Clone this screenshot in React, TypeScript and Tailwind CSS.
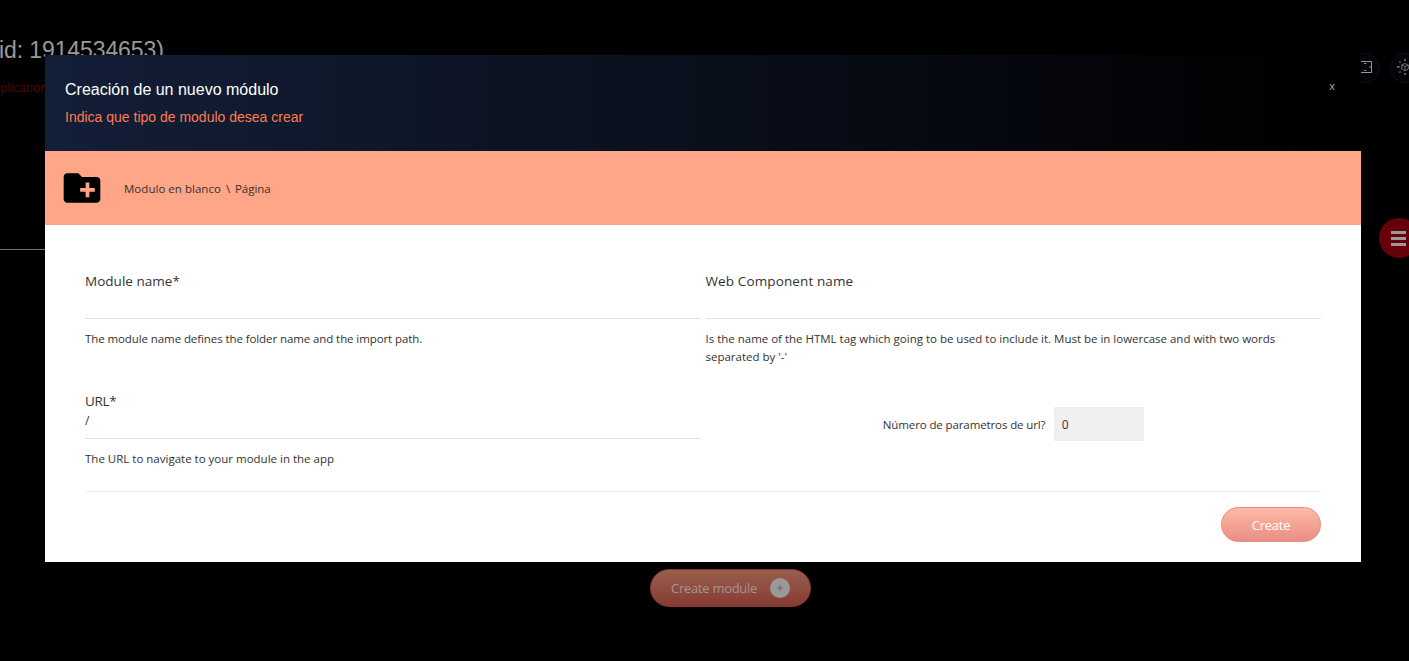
import React from "react";

function FolderPlus() {
  return (
    <svg className="block h-[44px] w-[44px]" viewBox="0 0 24 24" fill="#000">
      <path d="M20 6h-8l-2-2H4c-1.11 0-1.99.89-1.99 2L2 18c0 1.11.89 2 2 2h16c1.11 0 2-.89 2-2V8c0-1.11-.89-2-2-2zm-1 8h-3v3h-2v-3h-3v-2h3V9h2v3h3v2z" />
    </svg>
  );
}

function Backdrop() {
  return (
    <div className="flex h-full w-full flex-col">
      <div className="flex h-[249px] justify-between">
        <div className="flex flex-col pt-[36px]">
          <h1 className="-ml-px font-['Liberation_Sans',sans-serif] text-[23px] leading-[28px] tracking-[-0.1px] whitespace-nowrap text-[#999]">
            id: 1914534653)
          </h1>
          <p className="mt-[15px] text-[12px] leading-[18px] text-[#5c0006]">plication</p>
        </div>
        <div className="-mr-[11px] flex gap-[10px] pt-[53px]">
          <div className="flex h-[30px] w-[30px] items-center justify-center rounded-full border border-[#0c101b] bg-[#030408] pb-[2px]">
            <svg width="14" height="12" viewBox="0 0 14 12" fill="none" stroke="#999">
              <path d="M1 .5H13.500V11.500H1" />
              <path d="M6 2.500H8.500M6 9.500H8.500M11 6H13" strokeWidth=".9" />
            </svg>
          </div>
          <div className="flex h-[30px] w-[30px] items-center justify-center rounded-full border border-[#0c101b] bg-[#030408] pr-px pb-[2px]">
            <svg width="18" height="18" viewBox="0 0 18 18" fill="none" stroke="#858585">
              <path d="M9 5.500L12.300 7V11L9 12.800L5.700 11V7ZM5.700 7L9 8.500L12.300 7M9 8.500V12.800" strokeWidth=".8" />
              <path d="M9 1V3M9 15V17M1 9H3.500M14.500 9H17M3.500 3.500L4.500 4.500M14.500 3.500L13.500 4.500M3.500 14.500L4.500 13.500M14.500 14.500L13.500 13.500" strokeWidth="1.4" />
            </svg>
          </div>
        </div>
      </div>
      <div className="h-px w-[1300px] bg-[#737373]" />
      <div className="-mt-[32px] -mr-[10px] flex h-[40px] w-[40px] items-center self-end rounded-full bg-[#66000a] pl-[12px]">
        <svg width="15" height="15" viewBox="0 0 15 15" fill="#999">
          <path d="M0 0H15V3H0ZM0 6H15V9H0ZM0 12H15V15H0Z" />
        </svg>
      </div>
      <button className="mt-[311px] ml-[650px] flex h-[38px] w-[161px] items-center rounded-full border border-[#843831] bg-linear-to-b from-[#995f4e] to-[#853a32] pl-[20px] text-[#a39692]">
        <span className="w-[99px] pt-px text-left text-[13px] tracking-[-0.28px] whitespace-nowrap">Create module</span>
        <span className="flex h-[20px] w-[20px] items-center justify-center rounded-full bg-[#999]">
          <svg width="6" height="6" viewBox="0 0 6 6" stroke="#96564b">
            <path d="M0 3H6M3 0V6" />
          </svg>
        </span>
      </button>
    </div>
  );
}

interface FieldProps {
  label: string;
  value: string;
  hint: string;
  labelClass: string;
  hintClass: string;
}

function Field({ label, value, hint, labelClass, hintClass }: FieldProps) {
  return (
    <div className="flex-1">
      <div className={`text-[13.5px] leading-[20px] ${labelClass}`}>{label}</div>
      <div className="h-[28px] border-b border-[#e3e3da] pt-px text-[12px] leading-[18px]">{value}</div>
      <p className={`mt-[11px] text-[11.5px] leading-[18px] ${hintClass}`}>{hint}</p>
    </div>
  );
}

export default function App() {
  return (
    <div className="relative h-[661px] w-full overflow-hidden bg-black font-['Open_Sans','Noto_Sans',sans-serif] text-[#333]">
      <Backdrop />
      <section className="absolute top-[55px] left-[45px] flex h-[507px] w-[1316px] flex-col bg-white">
        <header className="flex h-[96px] justify-between bg-[linear-gradient(90deg,#131f38_0%,#000_97%)] px-[20px] font-['Liberation_Sans',sans-serif]">
          <div>
            <h2 className="mt-[25px] text-[16px] leading-[20px] text-white">Creación de un nuevo módulo</h2>
            <p className="mt-[8px] text-[14px] leading-[18px] text-[#ff7a50]">Indica que tipo de modulo desea crear</p>
          </div>
          <button className="mt-[22px] mr-[6px] h-[18px] font-['Open_Sans'] text-[11px] leading-[18px] text-[#aaa]">x</button>
        </header>
        <div className="flex h-[74px] items-center bg-[#ffa588] pl-[15px]">
          <FolderPlus />
          <div className="ml-[20px] flex pt-[2px] text-[11.5px] leading-[18px] whitespace-nowrap">
            <span className="w-[102px] tracking-[0.03px]">Modulo en blanco</span>
            <span className="w-[9px]">\</span>
            <span className="tracking-[-0.05px]">Página</span>
          </div>
        </div>
        <div className="px-[40px] pt-[46px]">
          <div className="flex h-[120px] gap-[5px]">
            <Field
              label="Module name*"
              value=""
              hint="The module name defines the folder name and the import path."
              labelClass="tracking-[0.02px]"
              hintClass="tracking-[-0.09px]"
            />
            <Field
              label="Web Component name"
              value=""
              hint="Is the name of the HTML tag which going to be used to include it. Must be in lowercase and with two words separated by '-'"
              labelClass="tracking-[0.12px]"
              hintClass="tracking-[-0.01px]"
            />
          </div>
          <div className="flex h-[101px] gap-[5px] border-b border-[#eee]">
            <Field
              label="URL*"
              value="/"
              hint="The URL to navigate to your module in the app"
              labelClass="tracking-[-0.3px]"
              hintClass=""
            />
            <div className="flex flex-1 items-start justify-center pt-[16px]">
              <label className="w-[171px] pt-px text-[11.5px] leading-[34px] tracking-[-0.11px] whitespace-nowrap">Número de parametros de url?</label>
              <div className="h-[34px] w-[90px] bg-[#efefef] pt-px pl-[8px] text-[12px] leading-[34px]">0</div>
            </div>
          </div>
          <div className="flex justify-end pt-[15px]">
            <button className="h-[35px] w-[100px] rounded-full border border-[#e98b80] bg-linear-to-b from-[#fdbba6] to-[#e98d84] pt-[2px] text-[13px] tracking-[-0.25px] text-white">Create</button>
          </div>
        </div>
      </section>
    </div>
  );
}
